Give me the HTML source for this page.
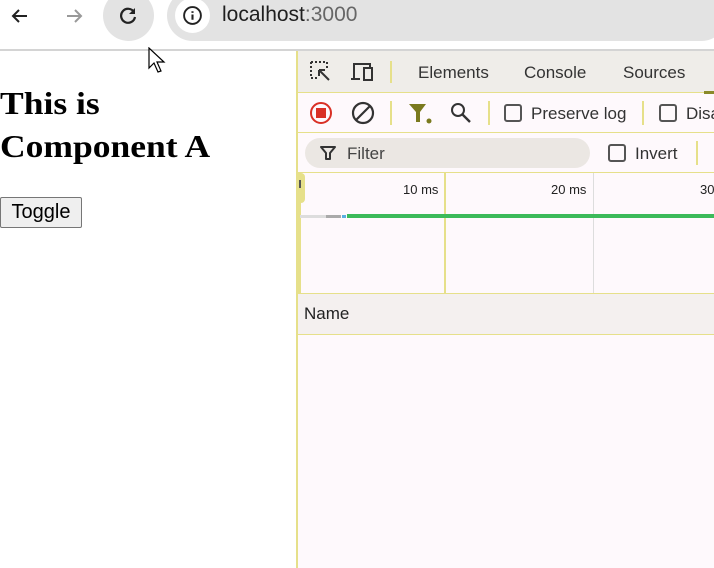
<!DOCTYPE html>
<html><head><style>
*{margin:0;padding:0;box-sizing:border-box}
body{width:714px;height:568px;overflow:hidden;background:#fff;font-family:"Liberation Sans",sans-serif;position:relative}
.a{position:absolute;white-space:nowrap}
.dt{font-family:"Liberation Sans",sans-serif;color:#333;font-size:17px}
</style></head><body>
<div class="a" style="left:0;top:0;width:714px;height:50px;background:#fff"></div>
<div class="a" style="left:0;top:49px;width:714px;height:2px;background:#d4d4d4"></div>
<svg class="a" style="left:8px;top:4px" width="24" height="24" viewBox="0 0 24 24"><path d="M19 12H5M11 6l-6 6 6 6" stroke="#222" stroke-width="2" fill="none"/></svg>
<svg class="a" style="left:62px;top:4px" width="24" height="24" viewBox="0 0 24 24"><path d="M5 12h14M13 6l6 6-6 6" stroke="#999" stroke-width="2" fill="none"/></svg>
<div class="a" style="left:103px;top:-10px;width:51px;height:51px;border-radius:50%;background:#e3e3e3"></div>
<svg class="a" style="left:116px;top:4px" width="24" height="24" viewBox="0 0 24 24"><path d="M18 8A7 7 0 1 0 19 13" stroke="#222" stroke-width="2.2" fill="none"/><path d="M19 4v6h-6z" fill="#222"/></svg>
<div class="a" style="left:167px;top:-10px;width:560px;height:51px;border-radius:26px;background:#e3e3e3"></div>
<div class="a" style="left:175px;top:-2px;width:35px;height:35px;border-radius:50%;background:#fff"></div>
<svg class="a" style="left:182px;top:5px" width="21" height="21" viewBox="0 0 20 20"><circle cx="10" cy="10" r="8" stroke="#222" stroke-width="1.8" fill="none"/><path d="M10 9v5M10 6v1.5" stroke="#222" stroke-width="2"/></svg>
<div class="a" style="left:222px;top:3px;font-size:21px;color:#1f1f1f">localhost<span style="color:#666">:3000</span></div>
<div class="a" style="left:0;top:82px;font-family:'Liberation Serif',serif;font-weight:bold;font-size:32px;line-height:43px;color:#000;transform:scaleX(1.11);transform-origin:0 0">This is<br>Component A</div>
<div class="a" style="left:0;top:197px;width:82px;height:31px;border:1px solid #767676;border-radius:2px;background:#efefef;font-size:20px;text-align:center;line-height:28px">Toggle</div>
<svg class="a" style="left:148px;top:47px" width="20" height="28" viewBox="0 0 20 28"><path d="M1 1v20l5-5 4 9 3-1-4-9h7z" fill="#fff" stroke="#000" stroke-width="1.2"/></svg>
<div class="a" style="left:296px;top:51px;width:418px;height:517px;background:#fef9fc;border-left:2px solid #e6e08a"></div>
<div class="a" style="left:298px;top:51px;width:416px;height:42px;background:#efede9;border-bottom:1px solid #e6e08a"></div>
<svg class="a" style="left:309px;top:60px" width="24" height="24" viewBox="0 0 24 24"><path d="M2 2h16v6M2 2v16h6" stroke="#333" stroke-width="2" stroke-dasharray="2 2" fill="none"/><path d="M10 10l10 10M10 10h6M10 10v6" stroke="#333" stroke-width="2" fill="none"/></svg>
<svg class="a" style="left:350px;top:60px" width="26" height="24" viewBox="0 0 26 24"><path d="M4 18V4h16v3M1 19h9" stroke="#333" stroke-width="2" fill="none"/><rect x="14" y="8" width="8" height="12" stroke="#333" stroke-width="2" fill="none"/></svg>
<div class="a" style="left:390px;top:61px;width:2px;height:22px;background:#e6e08a"></div>
<div class="a dt" style="left:418px;top:63px">Elements</div>
<div class="a dt" style="left:524px;top:63px">Console</div>
<div class="a dt" style="left:623px;top:63px">Sources</div>
<div class="a" style="left:704px;top:91px;width:10px;height:3px;background:#8a8a2a"></div>
<div class="a" style="left:298px;top:93px;width:416px;height:40px;border-bottom:1px solid #e6e08a"></div>
<div class="a" style="left:310px;top:102px;width:22px;height:22px;border-radius:50%;border:2px solid #d93025"></div>
<div class="a" style="left:316px;top:108px;width:10px;height:10px;background:#d93025"></div>
<svg class="a" style="left:351px;top:101px" width="24" height="24" viewBox="0 0 24 24"><circle cx="12" cy="12" r="10" stroke="#333" stroke-width="2.2" fill="none"/><path d="M5 19L19 5" stroke="#333" stroke-width="2.2"/></svg>
<div class="a" style="left:390px;top:101px;width:2px;height:24px;background:#e6e08a"></div>
<svg class="a" style="left:408px;top:102px" width="26" height="24" viewBox="0 0 26 24"><path d="M1 2h17l-6 8v10h-4V10z" fill="#7a7a1e"/><circle cx="21" cy="19" r="2.5" fill="#7a7a1e"/></svg>
<svg class="a" style="left:449px;top:101px" width="24" height="24" viewBox="0 0 24 24"><circle cx="9" cy="9" r="6" stroke="#333" stroke-width="2" fill="none"/><path d="M13.5 13.5L21 21" stroke="#333" stroke-width="2.4"/></svg>
<div class="a" style="left:488px;top:101px;width:2px;height:24px;background:#e6e08a"></div>
<div class="a" style="left:504px;top:104px;width:18px;height:18px;border:2px solid #555;border-radius:3px"></div>
<div class="a dt" style="left:531px;top:104px">Preserve log</div>
<div class="a" style="left:642px;top:101px;width:2px;height:24px;background:#e6e08a"></div>
<div class="a" style="left:659px;top:104px;width:18px;height:18px;border:2px solid #555;border-radius:3px"></div>
<div class="a dt" style="left:686px;top:104px">Disable cache</div>
<div class="a" style="left:298px;top:133px;width:416px;height:40px;border-bottom:1px solid #e6e08a;background:#fef9fc"></div>
<div class="a" style="left:305px;top:138px;width:285px;height:30px;border-radius:15px;background:#ebe7e3"></div>
<svg class="a" style="left:320px;top:145px" width="16" height="16" viewBox="0 0 16 16"><path d="M1 2h14l-5 6v6h-4V8z" stroke="#333" stroke-width="2" fill="none" stroke-linejoin="round"/></svg>
<div class="a dt" style="left:347px;top:144px;color:#444">Filter</div>
<div class="a" style="left:608px;top:144px;width:18px;height:18px;border:2px solid #555;border-radius:3px"></div>
<div class="a dt" style="left:635px;top:144px">Invert</div>
<div class="a" style="left:696px;top:141px;width:2px;height:24px;background:#e6e08a"></div>
<div class="a" style="left:298px;top:173px;width:7px;height:30px;background:#e6e08a;border-radius:0 4px 4px 0"></div>
<div class="a" style="left:299px;top:180px;width:2px;height:8px;background:#555"></div>
<div class="a" style="left:298px;top:203px;width:3px;height:90px;background:#e6e08a"></div>
<div class="a" style="left:444px;top:173px;width:2px;height:120px;background:#e6e08a"></div>
<div class="a" style="left:593px;top:173px;width:1px;height:120px;background:#ddd"></div>
<div class="a" style="left:403px;top:182px;font-size:13px;color:#222">10 ms</div>
<div class="a" style="left:551px;top:182px;font-size:13px;color:#222">20 ms</div>
<div class="a" style="left:700px;top:182px;font-size:13px;color:#222">30 ms</div>
<div class="a" style="left:300px;top:215px;width:26px;height:3px;background:#ddd"></div>
<div class="a" style="left:326px;top:215px;width:15px;height:3px;background:#aaa"></div>
<div class="a" style="left:342px;top:215px;width:4px;height:3px;background:#5ab0e0"></div>
<div class="a" style="left:347px;top:214px;width:367px;height:4px;background:#3cba5a"></div>
<div class="a" style="left:298px;top:293px;width:416px;height:42px;background:#f4f0ef;border-top:1px solid #e6e08a;border-bottom:1px solid #e6e08a"></div>
<div class="a dt" style="left:304px;top:304px;color:#222">Name</div>
</body></html>
